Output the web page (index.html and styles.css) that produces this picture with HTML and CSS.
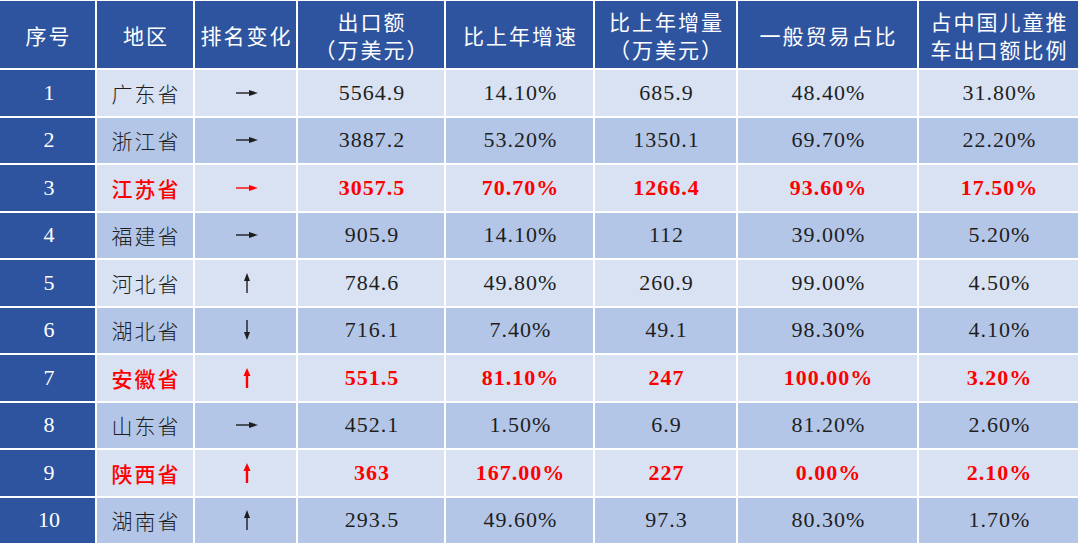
FILE: index.html
```html
<!DOCTYPE html>
<html lang="zh">
<head>
<meta charset="utf-8">
<title>儿童推车出口</title>
<link rel="stylesheet" href="styles.css">
</head>
<body>
<div class="table">
  <div class="th">序号</div>
  <div class="th">地区</div>
  <div class="th">排名变化</div>
  <div class="th">出口额<br>（万美元）</div>
  <div class="th">比上年增速</div>
  <div class="th">比上年增量<br>（万美元）</div>
  <div class="th">一般贸易占比</div>
  <div class="th">占中国儿童推<br>车出口额比例</div>

  <div class="idx">1</div>
  <div class="td l cn">广东省</div>
  <div class="td l"><svg class="ar" width="22" height="10" viewBox="0 0 22 10"><line x1="0" y1="5" x2="15" y2="5"/><polygon points="13,2 22,5 13,8"/></svg></div>
  <div class="td l">5564.9</div>
  <div class="td l">14.10%</div>
  <div class="td l">685.9</div>
  <div class="td l">48.40%</div>
  <div class="td l">31.80%</div>

  <div class="idx">2</div>
  <div class="td d cn">浙江省</div>
  <div class="td d"><svg class="ar" width="22" height="10" viewBox="0 0 22 10"><line x1="0" y1="5" x2="15" y2="5"/><polygon points="13,2 22,5 13,8"/></svg></div>
  <div class="td d">3887.2</div>
  <div class="td d">53.20%</div>
  <div class="td d">1350.1</div>
  <div class="td d">69.70%</div>
  <div class="td d">22.20%</div>

  <div class="idx">3</div>
  <div class="td l cn red">江苏省</div>
  <div class="td l red"><svg class="ar" width="22" height="10" viewBox="0 0 22 10"><line x1="0" y1="5" x2="15" y2="5"/><polygon points="13,2 22,5 13,8"/></svg></div>
  <div class="td l red">3057.5</div>
  <div class="td l red">70.70%</div>
  <div class="td l red">1266.4</div>
  <div class="td l red">93.60%</div>
  <div class="td l red">17.50%</div>

  <div class="idx">4</div>
  <div class="td d cn">福建省</div>
  <div class="td d"><svg class="ar" width="22" height="10" viewBox="0 0 22 10"><line x1="0" y1="5" x2="15" y2="5"/><polygon points="13,2 22,5 13,8"/></svg></div>
  <div class="td d">905.9</div>
  <div class="td d">14.10%</div>
  <div class="td d">112</div>
  <div class="td d">39.00%</div>
  <div class="td d">5.20%</div>

  <div class="idx">5</div>
  <div class="td l cn">河北省</div>
  <div class="td l"><svg class="ar" width="10" height="20" viewBox="0 0 10 20"><line x1="5" y1="6" x2="5" y2="20"/><polygon points="2,8 5,0 8,8"/></svg></div>
  <div class="td l">784.6</div>
  <div class="td l">49.80%</div>
  <div class="td l">260.9</div>
  <div class="td l">99.00%</div>
  <div class="td l">4.50%</div>

  <div class="idx">6</div>
  <div class="td d cn">湖北省</div>
  <div class="td d"><svg class="ar" width="10" height="20" viewBox="0 0 10 20"><line x1="5" y1="0" x2="5" y2="14"/><polygon points="2,12 5,20 8,12"/></svg></div>
  <div class="td d">716.1</div>
  <div class="td d">7.40%</div>
  <div class="td d">49.1</div>
  <div class="td d">98.30%</div>
  <div class="td d">4.10%</div>

  <div class="idx">7</div>
  <div class="td l cn red">安徽省</div>
  <div class="td l red"><svg class="ar bold" width="10" height="20" viewBox="0 0 10 20"><line x1="5" y1="6" x2="5" y2="20"/><polygon points="1.5,8 5,0 8.5,8"/></svg></div>
  <div class="td l red">551.5</div>
  <div class="td l red">81.10%</div>
  <div class="td l red">247</div>
  <div class="td l red">100.00%</div>
  <div class="td l red">3.20%</div>

  <div class="idx">8</div>
  <div class="td d cn">山东省</div>
  <div class="td d"><svg class="ar" width="22" height="10" viewBox="0 0 22 10"><line x1="0" y1="5" x2="15" y2="5"/><polygon points="13,2 22,5 13,8"/></svg></div>
  <div class="td d">452.1</div>
  <div class="td d">1.50%</div>
  <div class="td d">6.9</div>
  <div class="td d">81.20%</div>
  <div class="td d">2.60%</div>

  <div class="idx">9</div>
  <div class="td l cn red">陕西省</div>
  <div class="td l red"><svg class="ar bold" width="10" height="20" viewBox="0 0 10 20"><line x1="5" y1="6" x2="5" y2="20"/><polygon points="1.5,8 5,0 8.5,8"/></svg></div>
  <div class="td l red">363</div>
  <div class="td l red">167.00%</div>
  <div class="td l red">227</div>
  <div class="td l red">0.00%</div>
  <div class="td l red">2.10%</div>

  <div class="idx">10</div>
  <div class="td d cn">湖南省</div>
  <div class="td d"><svg class="ar" width="10" height="20" viewBox="0 0 10 20"><line x1="5" y1="6" x2="5" y2="20"/><polygon points="2,8 5,0 8,8"/></svg></div>
  <div class="td d">293.5</div>
  <div class="td d">49.60%</div>
  <div class="td d">97.3</div>
  <div class="td d">80.30%</div>
  <div class="td d">1.70%</div>
</div>
</body>
</html>
```
FILE: styles.css
```css
html, body {
  margin: 0;
  padding: 0;
  background: #ffffff;
}
.table {
  width: 1080px;
  height: 543px;
  box-sizing: border-box;
  padding: 1px 2px 0 0;
  display: grid;
  grid-template-columns: 95px 96px 101px 146px 147px 141px 179px 159px;
  grid-template-rows: 67px repeat(10, 1fr);
  gap: 2px;
  background: #ffffff;
  font-family: "Liberation Serif", "Noto Sans CJK SC", serif;
}
.th {
  background: #2e54a0;
  color: #ffffff;
  font-family: "Noto Sans CJK SC", sans-serif;
  font-size: 21px;
  letter-spacing: 2px;
  line-height: 28px;
  display: flex;
  align-items: center;
  justify-content: center;
  text-align: center;
  padding-left: 2px;
}
.idx {
  background: #2e54a0;
  color: #ffffff;
  font-size: 22px;
  display: flex;
  align-items: center;
  justify-content: center;
  padding-left: 3px;
}
.td {
  display: flex;
  align-items: center;
  justify-content: center;
  font-size: 22px;
  letter-spacing: 1px;
  color: #1e1e1e;
  padding-left: 2px;
}
.td.l { background: #d9e2f3; }
.td.d { background: #b4c6e7; }
.td.cn {
  font-family: "Noto Sans CJK SC", sans-serif;
  font-weight: 300;
  font-size: 21px;
  letter-spacing: 2px;
}
.td.red {
  color: #ff0000;
  font-weight: bold;
}
.td.cn.red { font-weight: 500; }
.ar line {
  stroke: #1e1e1e;
  stroke-width: 1.4;
}
.ar polygon { fill: #1e1e1e; }
.red .ar line { stroke: #ff0000; }
.red .ar polygon { fill: #ff0000; }
.ar.bold line { stroke-width: 2.4; }
```
